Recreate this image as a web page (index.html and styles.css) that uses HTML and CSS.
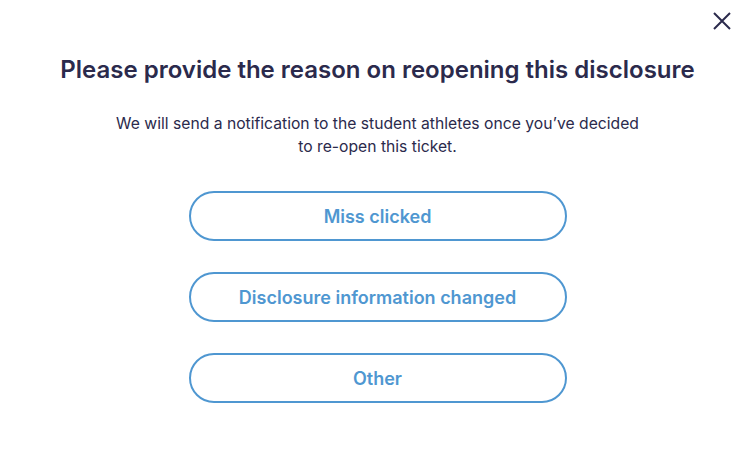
FILE: index.html
```html
<!DOCTYPE html>
<html lang="en">
<head>
    <meta charset="UTF-8">
    <title>Reopen disclosure</title>
    <link rel="stylesheet" href="styles.css">
</head>
<body>
    <div class="modal">
        <button class="close" aria-label="Close">
            <svg viewBox="0 0 18 18" width="18" height="18">
                <path d="M1 1 L17 17 M17 1 L1 17" stroke="#2b2a4c" stroke-width="2" fill="none"/>
            </svg>
        </button>
        <h1 class="title">Please provide the reason on reopening this disclosure</h1>
        <p class="subtitle">We will send a notification to the student athletes once you’ve decided<br>to re-open this ticket.</p>
        <div class="reasons">
            <button class="reason">Miss clicked</button>
            <button class="reason">Disclosure information changed</button>
            <button class="reason">Other</button>
        </div>
    </div>
</body>
</html>
```

FILE: styles.css
```css
body {
    margin: 0;
    background: #fff;
    font-family: Inter, "Open Sans", sans-serif;
}
.modal {
    position: relative;
    width: 752px;
    height: 473px;
    display: flex;
    flex-direction: column;
    align-items: center;
    padding: 55px 0 0 3px;
    box-sizing: border-box;
}
.close {
    position: absolute;
    top: 12px;
    right: 21px;
    background: none;
    border: none;
    padding: 0;
    cursor: pointer;
}
.close svg {
    display: block;
}
.title {
    margin: 0;
    font-size: 24px;
    font-weight: 600;
    color: #2b2a4c;
    line-height: 30px;
}
.subtitle {
    margin: 27px 0 0;
    font-size: 15.7px;
    line-height: 23px;
    color: #2b2a4c;
    text-align: center;
}
.reasons {
    margin-top: 33px;
    display: flex;
    flex-direction: column;
    gap: 31px;
}
.reason {
    width: 378px;
    height: 50px;
    border: 2px solid #4f97d1;
    border-radius: 25px;
    background: #fff;
    color: #4f97d1;
    font-family: Inter, "Open Sans", sans-serif;
    font-size: 18px;
    font-weight: 600;
    cursor: pointer;
}
```
